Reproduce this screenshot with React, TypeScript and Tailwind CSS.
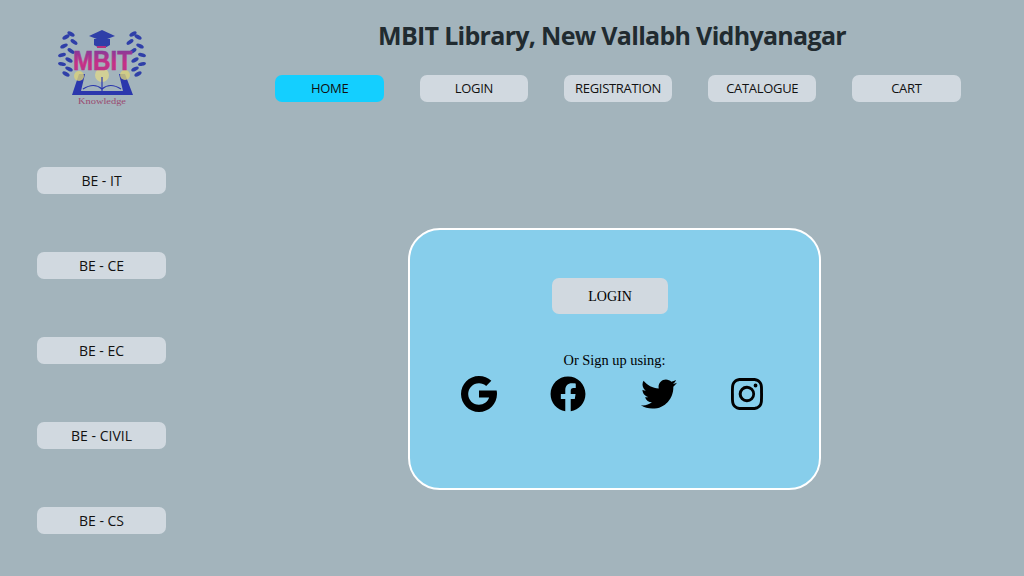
import { BsInstagram } from "react-icons/bs";
import { FaFacebook, FaTwitter } from "react-icons/fa";

const navItems = ["HOME", "LOGIN", "REGISTRATION", "CATALOGUE", "CART"];
const branches = ["BE - IT", "BE - CE", "BE - EC", "BE - CIVIL", "BE - CS"];

// wreath leaves for the left side, right side is mirrored
const leaves = [
  [16, 7, 30],
  [11, 10, -30],
  [19, 15, 35],
  [9, 19, -25],
  [16, 24, 35],
  [7, 28, -15],
  [14, 33, 30],
  [7, 37, 10],
  [14, 42, 25],
  [11, 47, 30],
];

const GoogleIcon = () => (
  <svg width="36" height="36" viewBox="4 4 40 40" fill="currentColor">
    <path d="M43.6 20.1H42V20H24v8h11.3C33.7 32.7 29.2 36 24 36c-6.6 0-12-5.4-12-12s5.4-12 12-12c3.1 0 5.8 1.2 8 3l5.7-5.7C34 6.1 29.3 4 24 4 13 4 4 13 4 24s9 20 20 20 20-9 20-20c0-1.3-.1-2.7-.4-3.9z" />
  </svg>
);

const Logo = () => (
  <svg width="96" height="82" viewBox="0 0 96 82" className="block">
    <defs>
      <linearGradient id="mbit" x1="0" y1="0" x2="0" y2="1">
        <stop offset="0" stopColor="#6f3fa0" />
        <stop offset="0.6" stopColor="#c92f86" />
        <stop offset="1" stopColor="#a93a8c" />
      </linearGradient>
    </defs>
    <g fill="#2f3fa8">
      {leaves.map(([x, y, r], i) => (
        <g key={i}>
          <ellipse cx={x} cy={y} rx="4" ry="1.9" transform={`rotate(${r} ${x} ${y})`} />
          <ellipse cx={94 - x} cy={y} rx="4" ry="1.9" transform={`rotate(${-r} ${94 - x} ${y})`} />
        </g>
      ))}
      <path d="M47 3 L60 9 L47 14 L34 9 Z" />
      <path d="M39 12 h16 v6 q-8 6 -16 0 Z" />
      <path d="M17 68 L24 47 H30 L26 64 H68 L64 47 H70 L78 68 Z" fill="#2b37ad" />
    </g>
    <circle cx="24" cy="49" r="5" fill="#d9d27a" opacity="0.8" />
    <circle cx="70" cy="48" r="5" fill="#d9d27a" opacity="0.8" />
    <circle cx="47" cy="48" r="7" fill="#e6dc86" opacity="0.7" />
    <path d="M47 50 V64" stroke="#2b37ad" strokeWidth="1.2" />
    <path d="M28 62 Q39 55 47 62 Q55 55 66 62" stroke="#2b37ad" strokeWidth="1.2" fill="none" />
    <rect x="42" y="19" width="9" height="2" fill="#b5307f" />
    <text
      x="47.5"
      y="43"
      textAnchor="middle"
      fontFamily="'Liberation Sans', sans-serif"
      fontWeight="700"
      fontSize="28"
      fill="url(#mbit)"
      stroke="url(#mbit)"
      strokeWidth="0.6"
      textLength="59"
      lengthAdjust="spacingAndGlyphs"
    >
      MBIT
    </text>
    <text
      x="47"
      y="77"
      textAnchor="middle"
      fontFamily="'Liberation Serif', serif"
      fontSize="8"
      fill="#9a4a70"
      textLength="48"
      lengthAdjust="spacingAndGlyphs"
    >
      Knowledge
    </text>
  </svg>
);

export default function App() {
  return (
    <div className="h-[576px] overflow-hidden bg-[#a3b4bc] flex text-black font-['Open_Sans',sans-serif]">
      <div className="w-[275px] shrink-0 pt-[27px] pl-[37px]">
        <div className="pl-[18px] h-[82px]">
          <Logo />
        </div>
        <div className="mt-[58px] flex flex-col gap-[58px]">
          {branches.map((b) => (
            <button
              key={b}
              className="w-[129px] h-[27px] rounded-[7px] bg-[#d1d9e0] text-[14px] text-[#111]"
            >
              {b}
            </button>
          ))}
        </div>
      </div>

      <div className="flex-1">
        <h1 className="w-[674px] mt-[17px] text-center text-[25px] leading-[36px] font-bold tracking-[-0.7px] text-[#212b30]">
          MBIT Library, New Vallabh Vidhyanagar
        </h1>
        <nav className="mt-[22px] ml-[0.4px] flex gap-[35.7px]">
          {navItems.map((item, i) => (
            <button
              key={item}
              className={`w-[108.5px] h-[27px] rounded-[7px] text-[13px] tracking-[-0.3px] text-[#111] ${
                i === 0 ? "bg-[#14cfff]" : "bg-[#d1d9e0]"
              }`}
            >
              {item}
            </button>
          ))}
        </nav>

        <div className="mt-[126px] ml-[133px] w-[413px] h-[262px] rounded-[32px] border-2 border-white bg-[#87ceeb] font-['Liberation_Serif',serif] flex flex-col">
          <button className="mt-[48px] ml-[142px] w-[116px] h-[36px] rounded-[7px] bg-[#d1d9e0] text-[14px] pt-[1px]">
            LOGIN
          </button>
          <p className="mt-[37px] text-center text-[14.4px] leading-[18px]">
            Or Sign up using:
          </p>
          <div className="mt-[7px] pl-[51px] flex items-center">
            <GoogleIcon />
            <FaFacebook size={36} className="ml-[53px]" />
            <FaTwitter size={36} className="ml-[55px]" />
            <BsInstagram size={32} className="ml-[54px]" />
          </div>
        </div>
      </div>
    </div>
  );
}
